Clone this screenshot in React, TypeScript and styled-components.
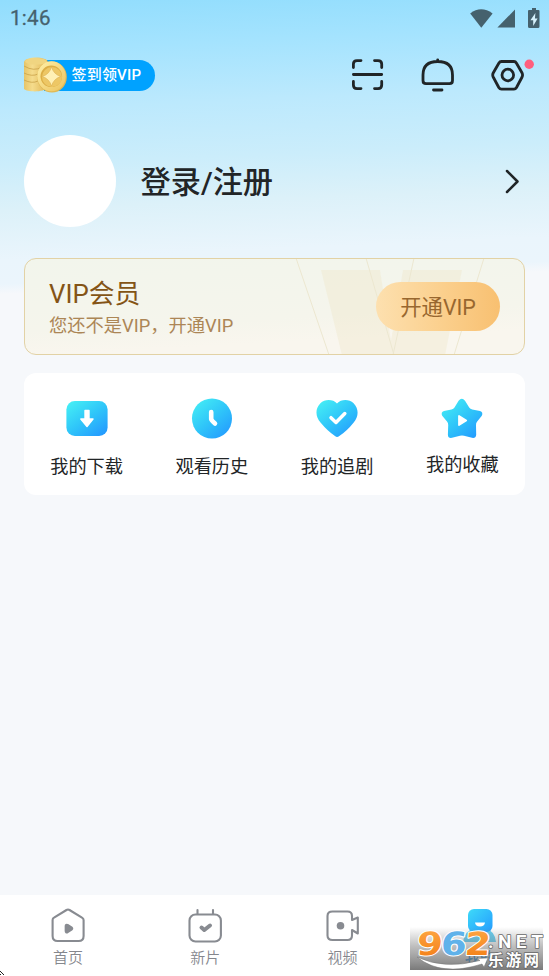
import React from 'react';
import styled, { createGlobalStyle } from 'styled-components';

const GlobalStyle = createGlobalStyle`
  * { box-sizing: border-box; }
  body { margin: 0; background: #f6f8fb; }
`;

const Screen = styled.div`
  position: relative;
  width: 549px;
  height: 976px;
  display: flex;
  flex-direction: column;
  overflow: hidden;
  font-family: Roboto, 'Noto Sans CJK SC', sans-serif;
  color: #222527;
  background: linear-gradient(177.6deg, #91ddfd 0, #a4e3fe 50px, #bce9fd 110px, #cbedfb 165px,
    #dcf1f9 210px, #eaf5fc 260px, #ebf5fc 284px, #f6f8fb 294px, #f6f8fb 100%);
`;

const StatusBar = styled.header`
  height: 37px;
  padding: 0 8px 0 10px;
  display: flex;
  align-items: center;
  justify-content: space-between;
  font-size: 20.5px;
  line-height: 39px;
  letter-spacing: 0.3px;
  color: #45616d;
  -webkit-text-stroke: 0.3px #45616d;
`;

const Toolbar = styled.div`
  height: 76px;
  padding: 0 14px 0 24px;
  display: flex;
  align-items: center;
  justify-content: space-between;
`;

const CheckIn = styled.button`
  display: flex;
  align-items: center;
  width: 131px;
  height: 36px;
  padding: 0;
  border: 0;
  background: linear-gradient(#00a2ff, #00a2ff) no-repeat 20px 3px / 60px 31px;
  font: 500 15px/31px Roboto, 'Noto Sans CJK SC', sans-serif;
  color: #fff;
`;

const CheckInLabel = styled.span`
  height: 31px;
  width: 87px;
  padding-left: 3.5px;
  border-radius: 0 16px 16px 0;
  background: #00a2ff;
  white-space: nowrap;
  text-align: left;
  letter-spacing: 0.2px;
`;

const Actions = styled.div`
  display: flex;
  align-items: center;
`;

const Profile = styled.section`
  height: 92px;
  margin: 22px 28px 0 24px;
  display: flex;
  align-items: center;
`;

const Avatar = styled.div`
  width: 92px;
  height: 92px;
  border-radius: 50%;
  background: #fff;
`;

const LoginText = styled.h1`
  flex: 1;
  margin: 4px 0 0 24.5px;
  font-size: 30.2px;
  line-height: 44px;
  font-weight: 500;
`;

const VipCard = styled.section`
  position: relative;
  width: 501px;
  height: 97px;
  margin: 31px 24px 0;
  padding: 0 23px;
  display: flex;
  align-items: center;
  justify-content: space-between;
  overflow: hidden;
  border: 1.5px solid #e2d2a5;
  border-radius: 12px;
  background: linear-gradient(177deg, #f2f5ec 0, #f5f5ec 60%, #f9f6ee 80%);
`;

const VipBackdrop = styled.svg`
  position: absolute;
  inset: -1px 0 0 -1px;
`;

const VipCopy = styled.div`
  position: relative;
  padding: 1px 0 0 1px;
  color: #ac8656;
  font-size: 18.3px;
  line-height: 26px;
`;

const VipTitle = styled.h2`
  margin: 0 0 1px;
  color: #845416;
  font-size: 25.8px;
  line-height: 36px;
  font-weight: 400;
`;

const VipButton = styled.button`
  position: relative;
  width: 124px;
  height: 49px;
  right: 1px;
  padding: 3px 0 0;
  border: 0;
  border-radius: 25px;
  background: linear-gradient(90deg, #fde0af, #fbcf8c 55%, #f8c071);
  color: #98672f;
  font: 400 21.4px/46px Roboto, 'Noto Sans CJK SC', sans-serif;
`;

const Menu = styled.nav`
  height: 122px;
  margin: 18px 24px 0;
  display: grid;
  grid-template-columns: repeat(4, 1fr);
  border-radius: 12px;
  background: #fff;
`;

const MenuItem = styled.div<{ $lift?: number }>`
  display: flex;
  flex-direction: column;
  align-items: center;
  padding-top: 22px;
  gap: ${({ $lift = 0 }) => 11 - $lift}px;
  font-size: 18.2px;
  line-height: 28px;
`;

const TabBar = styled.nav`
  height: 81px;
  margin-top: auto;
  display: grid;
  grid-template-columns: repeat(4, 1fr);
  background: #fff;
`;

const Tab = styled.div<{ $active?: boolean }>`
  display: flex;
  flex-direction: column;
  align-items: center;
  padding: 11px 1px 0 0;
  gap: 1px;
  font-size: 15px;
  line-height: 23px;
  font-weight: ${({ $active }) => ($active ? 500 : 350)};
  color: ${({ $active }) => ($active ? '#168ee6' : '#85878d')};
`;

const SiteMark = styled.svg`
  position: absolute;
  left: 410px;
  top: 926px;
`;

const CornerPixels = styled.svg`
  position: absolute;
  left: 0;
  bottom: 0;
`;

const StatusIcons = () => (
  <svg width="72" height="22" viewBox="0 0 72 22" fill="#45616d">
    <path d="M1.2 5.4Q12 -2.8 23.6 5.4L12.3 19.8Z" />
    <path d="M46 1.5V19.5H28.4Z" />
    <path d="M61 2H63V0H67V2H69.5Q70.5 2 70.5 3V18.5Q70.5 20 69 20H60.5Q59 20 59 18.5V3Q59 2 60 2Z" />
    <path d="M66.4 5L61.4 12.3H64.2V18L68.6 10.4H65.9Z" fill="#d6f2fc" />
  </svg>
);

const Coins = () => (
  <svg width="44" height="36" viewBox="0 0 44 36">
    <defs>
      <linearGradient id="stack" x1="0" x2="1"><stop stopColor="#e6c468" /><stop offset=".35" stopColor="#f5dc8c" /><stop offset="1" stopColor="#deb250" /></linearGradient>
      <linearGradient id="coin" x1="0" y1="0" x2="1" y2="1"><stop stopColor="#fff0a8" /><stop offset="1" stopColor="#ebc35e" /></linearGradient>
    </defs>
    <path d="M0 5C1-1 23-1 24 5V30C20 36 3 35 0 32Z" fill="url(#stack)" />
    <path d="M0 9Q10 15 18 10M0 16Q8 20 14 17M0 23Q8 27 14 24" fill="none" stroke="#c9a147" strokeWidth=".8" />
    <ellipse cx="12" cy="4.3" rx="11" ry="3.3" fill="#f0d581" />
    <ellipse cx="28" cy="20" rx="14.8" ry="15.5" fill="#e0b954" />
    <ellipse cx="27.5" cy="19.3" rx="14.2" ry="15" fill="url(#coin)" />
    <circle cx="27.3" cy="19.3" r="10.8" fill="#dcae46" />
    <circle cx="28" cy="20" r="10" fill="#edc765" />
    <path d="M27.5 10Q29.5 17 36.5 19.5Q29.5 22 27.5 29Q25.5 22 18.5 19.5Q25.5 17 27.5 10Z" fill="#fff0b5" stroke="#d8aa4a" strokeWidth=".5" />
  </svg>
);

const ToolIcons = () => (
  <svg width="184" height="38" viewBox="351 56 184 38" fill="none" stroke="#202527" strokeWidth="2.8" strokeLinecap="round" strokeLinejoin="round">
    <path d="M353.4 67.5V64Q353.4 60.6 357 60.6H361M374.5 60.6H378Q381.7 60.6 381.7 64V67.5M381.7 81.5V85Q381.7 88.6 378 88.6H374.5M361 88.6H357Q353.4 88.6 353.4 85V81.5M353.4 74.5H381.7" />
    <path d="M423 75Q423 61.5 437.7 61.5Q452.5 61.5 452.5 75V80.5Q452.5 83.7 449.5 83.7H426Q423 83.7 423 80.5ZM437.7 59.8V61M433.5 90H442" />
    <path d="M501.5 61.5H514Q515.5 61.5 516.5 63.2L522.1 73Q523 75 522.1 77L516.5 87.5Q515.5 89.2 514 89.2H501.5Q499.8 89.2 498.8 87.5L493.2 77Q492.2 75 493.2 73L498.8 63.2Q499.8 61.5 501.5 61.5Z" />
    <circle cx="507.8" cy="75" r="5.8" />
    <circle cx="529.2" cy="64.2" r="4.7" fill="#ff5f7e" stroke="none" />
  </svg>
);

type MenuKind = 'download' | 'history' | 'follow' | 'favorite';

const shapes: Record<MenuKind, React.ReactNode> = {
  download: <rect x="1.4" y="6" width="41.2" height="35" rx="8.5" />,
  history: <circle cx="22" cy="23.5" r="20" />,
  follow: <path d="M22 8.4C18 4 10 3.7 5.4 8.2C-.4 14 .7 22 5.5 27.5Q12.5 36 20 41Q22 42.8 24.3 41Q32 36 38.7 27.5C43.4 22 44.4 14 38.6 8.2C34 3.7 26 4 22 8.4Z" />,
  favorite: <path d="M18.6 5.7Q21.8 1.6 25 5.7L29.2 12.5Q30.3 14.2 32.2 14.6L40 16Q43.5 17.3 41.8 20.8L37 26.8Q35.9 28.3 36 30.2L36.2 39.7Q35.8 43.5 32 42.8L24 40.8Q22 40.2 20 40.8L12 42.8Q8 43.5 7.9 39.7L8.2 30.2Q8.3 28.3 7.2 26.8L2.2 20.8Q.5 17.3 4 16L11.5 14.6Q13.5 14.2 14.5 12.5Z" />,
};

const marks: Record<MenuKind, React.ReactNode> = {
  download: <path d="M20 15.5H24V24H28L22 31.5L15.8 24H20Z" fill="#fff" stroke="#fff" strokeWidth="1.4" strokeLinejoin="round" />,
  history: <path d="M21.2 17V24Q21.5 25.5 25 28.5" stroke="#fff" strokeWidth="4.6" strokeLinecap="round" strokeLinejoin="round" fill="none" />,
  follow: <path d="M16 22.7L21 27.5L29.8 18.5" stroke="#fff" strokeWidth="3.5" strokeLinecap="round" strokeLinejoin="round" fill="none" />,
  favorite: <path d="M19 21V30L26.2 25.5Z" fill="#fff" stroke="#fff" strokeWidth="1.8" strokeLinejoin="round" />,
};

const MenuIcon = ({ kind }: { kind: MenuKind }) => (
  <svg width="44" height="47" viewBox="0 0 44 47">
    <defs>
      <linearGradient id={`fill-${kind}`} x1=".08" y1=".05" x2=".9" y2="1">
        <stop stopColor="#44edf5" /><stop offset=".5" stopColor="#2fc5f9" /><stop offset="1" stopColor="#2398ff" />
      </linearGradient>
    </defs>
    <g fill={`url(#fill-${kind})`}>{shapes[kind]}</g>
    {marks[kind]}
  </svg>
);

const menu: { kind: MenuKind; label: string; lift?: number }[] = [
  { kind: 'download', label: '我的下载' },
  { kind: 'history', label: '观看历史' },
  { kind: 'follow', label: '我的追剧' },
  { kind: 'favorite', label: '我的收藏', lift: 2 },
];

const TabIcon = ({ children }: { children: React.ReactNode }) => (
  <svg width="38" height="40" viewBox="0 0 38 40" fill="none" stroke="#888b91" strokeWidth="2.1" strokeLinecap="round" strokeLinejoin="round">
    {children}
  </svg>
);

const tabs = [
  {
    label: '首页',
    icon: <TabIcon><path d="M3.6 14Q3.6 12.5 5 11.7L17.5 4Q19 3.1 20.5 4L33 11.7Q34.6 12.6 34.6 14V30Q34.6 35 29.6 35H8.6Q3.6 35 3.6 30Z" /><path d="M16.7 20Q16.7 18.4 18.6 19L22.5 21.3Q24 22.4 22.5 23.6L18.6 26.2Q16.7 27 16.7 25Z" fill="#888b91" /></TabIcon>,
  },
  {
    label: '新片',
    icon: <TabIcon><rect x="3.5" y="8.5" width="31.4" height="27" rx="6" /><path d="M11.5 4V8M27 4V8" /><path d="M15.5 21.5L18.3 24L24 19.5" strokeWidth="4" /></TabIcon>,
  },
  {
    label: '视频',
    icon: <TabIcon><path d="M8.5 5.5H23.5Q28 5.5 28 10V14L33.8 11.5V27.5L28 24V29.5Q28 34 23.5 34H8.5Q3.5 34 3.5 29.5V10Q3.5 5.5 8.5 5.5Z" /><circle cx="16.5" cy="19.8" r="3.8" fill="#888b91" stroke="none" /></TabIcon>,
  },
  {
    label: '我的',
    icon: (
      <svg width="38" height="40" viewBox="0 0 38 40">
        <defs><linearGradient id="person" x1="0" y1="0" x2="1" y2="1"><stop stopColor="#3edaf8" /><stop offset="1" stopColor="#249cff" /></linearGradient></defs>
        <path d="M2 36Q3 25 14 22H24Q34 25 35 36Z" fill="#63cff3" />
        <rect x="7" y="3" width="24.5" height="23" rx="6" fill="url(#person)" />
        <path d="M14 16.5H24Q23.5 20.5 19 20.5Q14.5 20.5 14 16.5Z" fill="#fff" />
      </svg>
    ),
  },
];

const Watermark = () => (
  <SiteMark width="139" height="50" viewBox="0 0 139 50">
    <defs>
      <linearGradient id="shade" x1="0" y1="0" x2="0" y2="1"><stop stopColor="#777" stopOpacity="0" /><stop offset=".45" stopColor="#777" stopOpacity=".48" /><stop offset="1" stopColor="#666" stopOpacity=".87" /></linearGradient>
      <linearGradient id="orange" x1="0" y1="0" x2="0" y2="1"><stop stopColor="#ffab49" /><stop offset="1" stopColor="#f27b12" /></linearGradient>
    </defs>
    <rect y="1" width="133" height="43" fill="url(#shade)" />
    <g fontFamily="'DejaVu Sans', sans-serif" fontWeight="700" fontSize="32" stroke="#fff" strokeWidth="2" paintOrder="stroke" strokeLinejoin="round" transform="translate(4 0) skewX(-5)">
      <text x="4.5" y="28.5" textLength="26" lengthAdjust="spacingAndGlyphs" fill="url(#orange)">9</text>
      <text x="28.5" y="28.5" textLength="26" lengthAdjust="spacingAndGlyphs" fill="#5fb2ea">6</text>
      <text x="52.5" y="28.5" textLength="26" lengthAdjust="spacingAndGlyphs" fill="url(#orange)">2</text>
    </g>
    <path d="M7 31Q34 44 70 34.5L67 32.5L78 32L74 41L72 38Q31 51 7 31Z" fill="#fff" stroke="#777" strokeWidth=".5" />
    <g fill="#fff" stroke="#686868" strokeWidth="1.6" paintOrder="stroke" strokeLinejoin="round" fontWeight="700">
      <text x="78" y="22" fontFamily="Roboto, sans-serif" fontSize="19" textLength="55" lengthAdjust="spacing">.NET</text>
      <text x="78" y="40" fontFamily="'Noto Sans CJK SC', sans-serif" fontSize="15.5" textLength="51">乐游网</text>
    </g>
  </SiteMark>
);

export default function App() {
  return (
    <>
      <GlobalStyle />
      <Screen>
        <StatusBar><span>1:46</span><StatusIcons /></StatusBar>
        <Toolbar>
          <CheckIn><Coins /><CheckInLabel>签到领VIP</CheckInLabel></CheckIn>
          <Actions><ToolIcons /></Actions>
        </Toolbar>
        <Profile>
          <Avatar />
          <LoginText>登录/注册</LoginText>
          <svg width="17" height="28" viewBox="0 0 17 28" fill="none" stroke="#202527" strokeWidth="2.5" strokeLinecap="round" strokeLinejoin="round"><path d="M3 4L13.5 14.5L3 25" /></svg>
        </Profile>
        <VipCard>
          <VipBackdrop width="501" height="97" viewBox="0 0 501 97">
            <path d="M297 12H356L367 83L379 12H438L421 97H318Z" fill="#efe9cf" opacity=".45" />
            <path d="M272 0L305 97M342 0L370 97M390 0L369 97M460 0L430 97" fill="none" stroke="#ece7d0" strokeWidth="1" />
          </VipBackdrop>
          <VipCopy><VipTitle>VIP会员</VipTitle>您还不是VIP，开通VIP</VipCopy>
          <VipButton>开通VIP</VipButton>
        </VipCard>
        <Menu>
          {menu.map(({ kind, label, lift }) => <MenuItem key={kind} $lift={lift}><MenuIcon kind={kind} />{label}</MenuItem>)}
        </Menu>
        <TabBar>
          {tabs.map(({ label, icon }, i) => <Tab key={label} $active={i === 3}>{icon}{label}</Tab>)}
        </TabBar>
        <Watermark />
        <CornerPixels width="5" height="5" viewBox="0 0 5 5"><path d="M0 0H1V1H0ZM1 1H2V2H1ZM2 2H3V3H2ZM3 3H4V4H3ZM0 3H1V4H0Z" fill="#222" /></CornerPixels>
      </Screen>
    </>
  );
}
